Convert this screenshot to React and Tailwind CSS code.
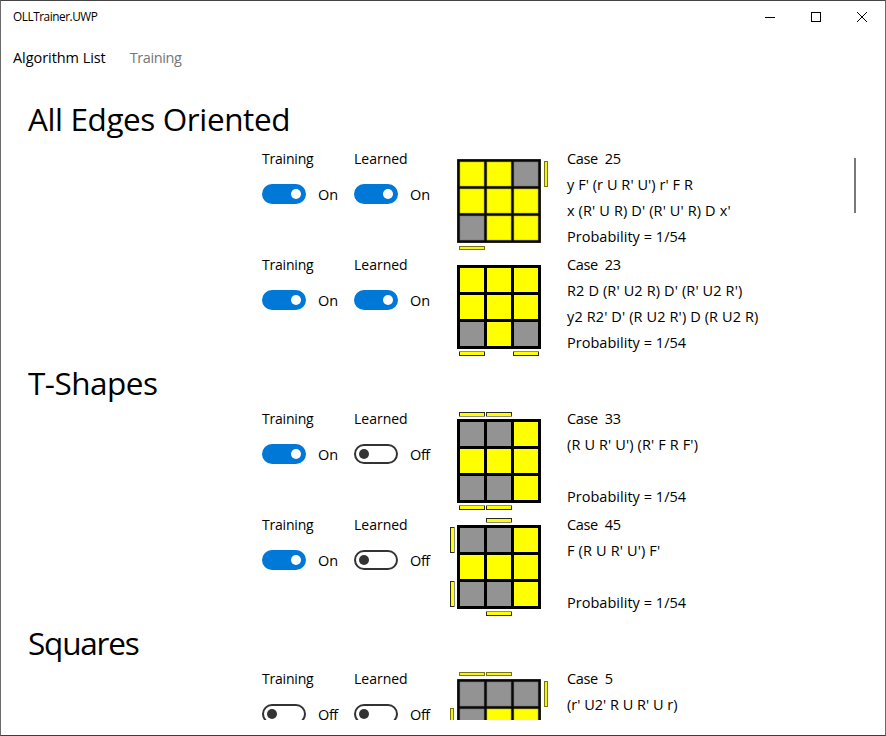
import React from "react";

const YELLOW = "#ffff00";
const GRAY = "#939393";

const sections = [
  {
    title: "All Edges Oriented",
    heading: "leading-[42px] tracking-[-0.4px]",
    cases: [
      {
        id: "25",
        training: true,
        learned: true,
        soft: true,
        cells: "YYGYYYGYY",
        bars: ["r0", "b0"],
        algs: [
          { text: "y F' (r U R' U') r' F R", tracking: "tracking-[0.06px]" },
          { text: "x (R' U R) D' (R' U' R) D x'", tracking: "tracking-[0.13px]" },
        ],
        probability: "1/54",
      },
      {
        id: "23",
        training: true,
        learned: true,
        cells: "YYYYYYGYG",
        bars: ["b0", "b2"],
        algs: [
          { text: "R2 D (R' U2 R) D' (R' U2 R')", tracking: "tracking-[0.13px]" },
          { text: "y2 R2' D' (R U2 R') D (R U2 R)", tracking: "tracking-[0.12px]" },
        ],
        probability: "1/54",
      },
    ],
  },
  {
    title: "T-Shapes",
    heading: "leading-[50px] tracking-[-0.5px]",
    cases: [
      {
        id: "33",
        training: true,
        learned: false,
        cells: "GGYYYYGGY",
        bars: ["t0", "t1", "b0", "b1"],
        algs: [{ text: "(R U R' U') (R' F R F')", tracking: "tracking-[0.13px]" }],
        probability: "1/54",
      },
      {
        id: "45",
        training: true,
        learned: false,
        cells: "GGYYYYGGY",
        bars: ["t1", "l0", "l2", "b1"],
        algs: [{ text: "F (R U R' U') F'", tracking: "tracking-[0.15px]" }],
        probability: "1/54",
      },
    ],
  },
  {
    title: "Squares",
    heading: "leading-[50px] tracking-[-1.2px]",
    cases: [
      {
        id: "5",
        training: false,
        learned: false,
        soft: true,
        cells: "GGGGYYYYG",
        bars: ["t0", "t1", "r0", "l1"],
        algs: [{ text: "(r' U2' R U R' U r)", tracking: "tracking-normal" }],
      },
    ],
  },
];

function Bar({ code, soft }) {
  const side = code[0];
  const offset = 2 + 27 * Number(code[1]);
  const vertical = side === "l" || side === "r";
  const thickness = soft ? 4 : 5;
  const far = soft ? 87 : 86;
  const x = side === "l" ? -7 : side === "r" ? far : offset;
  const y = side === "t" ? -7 : side === "b" ? far : offset;
  const w = vertical ? thickness : 26;
  const h = vertical ? 26 : thickness;
  if (soft) {
    return (
      <g>
        <rect x={x} y={y} width={w} height={h} fill="#77750f" />
        <rect x={x + 1} y={y + 1} width={w - 2} height={h - 2} fill="#f4f21a" />
      </g>
    );
  }
  return (
    <g>
      <rect x={x} y={y} width={w} height={h} fill="#2b2b22" />
      {side === "t" && <rect x={x} y={y + 4} width={w} height={1} fill="#8c8c8c" />}
      {side === "b" && <rect x={x} y={y} width={w} height={1} fill="#8c8c8c" />}
      {side === "l" && <rect x={x + 4} y={y} width={1} height={h} fill="#8c8c8c" />}
      {side === "r" && <rect x={x} y={y} width={1} height={h} fill="#8c8c8c" />}
      <rect x={x + 1} y={y + 1} width={w - 2} height={h - 2} fill={YELLOW} />
    </g>
  );
}

function Cube({ cells, bars, soft }) {
  return (
    <svg
      className="block h-[106px] w-[106px] shrink-0"
      viewBox="-10 -13 106 106"
      shapeRendering="crispEdges"
    >
      {soft ? (
        <rect x="0.1" y="0.1" width="83.8" height="83.8" fill="#080808" shapeRendering="auto" />
      ) : (
        <rect width="84" height="84" fill="#000000" />
      )}
      {cells.split("").map((c, i) => {
        const x = 3 + 27 * (i % 3);
        const y = 3 + 27 * Math.floor(i / 3);
        const fill = c === "Y" ? YELLOW : GRAY;
        return (
          <g key={i}>
            {soft && (
              <rect
                x={x - 0.3}
                y={y - 0.3}
                width="24.6"
                height="24.6"
                fill={c === "Y" ? "#c0c000" : "#777777"}
                shapeRendering="auto"
              />
            )}
            {soft ? (
              <rect
                x={x + 0.3}
                y={y + 0.3}
                width="23.4"
                height="23.4"
                fill={fill}
                shapeRendering="auto"
              />
            ) : (
              <rect x={x} y={y} width="24" height="24" fill={fill} />
            )}
          </g>
        );
      })}
      {bars.map((b) => (
        <Bar key={b} code={b} soft={soft} />
      ))}
    </svg>
  );
}

function Toggle({ label, tracking, on }) {
  return (
    <div className="w-[92px] shrink-0">
      <div className={`h-[26px] leading-[26px] text-[14px] ${tracking}`}>{label}</div>
      <div className="mt-3 flex h-5 items-center gap-3">
        {on ? (
          <span className="flex h-5 w-11 shrink-0 items-center justify-end rounded-full bg-[#0078d7] pr-[5px]">
            <span className="size-[10px] rounded-full bg-white" />
          </span>
        ) : (
          <span className="flex h-5 w-11 shrink-0 items-center rounded-full border-2 border-[#333333] pl-[3px]">
            <span className="size-[10px] rounded-full bg-[#333333]" />
          </span>
        )}
        <span className={on ? "pt-0.5" : "pt-0.5 tracking-[-0.4px]"}>{on ? "On" : "Off"}</span>
      </div>
    </div>
  );
}

function CaseRow({ item }) {
  return (
    <div className="flex h-[106px] pl-[261px]">
      <Toggle label="Training" tracking="tracking-[-0.2px]" on={item.training} />
      <Toggle label="Learned" tracking="tracking-normal" on={item.learned} />
      <div className="ml-px flex">
        <Cube cells={item.cells} bars={item.bars} soft={item.soft} />
        <div className="ml-[14px] grid grid-rows-[26px_26px_26px_26px] content-start whitespace-nowrap leading-[26px]">
          <div className="flex gap-[7px] tracking-[-0.35px]">
            <span>Case</span>
            <span>{item.id}</span>
          </div>
          {[0, 1].map((i) => (
            <div key={i} className={item.algs[i] ? item.algs[i].tracking : ""}>
              {item.algs[i] ? item.algs[i].text : ""}
            </div>
          ))}
          {item.probability && <div className="tracking-[0.03px]">Probability = {item.probability}</div>}
        </div>
      </div>
    </div>
  );
}

function TitleBar() {
  return (
    <header className="flex h-[31px] shrink-0 items-center justify-between pl-3">
      <span className="text-[11.8px] tracking-[-0.45px]">OLLTrainer.UWP</span>
      <svg className="h-[31px] w-[138px]" viewBox="0 0 138 31" fill="none" stroke="#000000">
        <path d="M18 16.5h10" />
        <rect x="64.5" y="11.5" width="9" height="9" />
        <path d="M110 11l10 10M120 11l-10 10" />
      </svg>
    </header>
  );
}

export default function App() {
  return (
    <div className="flex h-[736px] w-[886px] flex-col overflow-hidden border border-t-[#444444] border-r-[#6a6a6a] border-b-[#3c3c47] border-l-[#6a6a6a] bg-white font-['Open_Sans','Noto_Sans',sans-serif] text-[14.5px] text-black">
      <TitleBar />
      <nav className="flex h-[52px] shrink-0 items-center gap-[24px] pl-3">
        <span className="tracking-[-0.06px]">Algorithm List</span>
        <span className="tracking-[-0.4px] text-[#767676]">Training</span>
      </nav>
      <main className="mt-[14px] flex h-[622px] shrink-0 overflow-hidden">
        <div className="w-[853px] shrink-0">
          {sections.map((s) => (
            <section key={s.title}>
              <h2 className={`h-12 pl-[27px] text-[31.5px] ${s.heading}`}>{s.title}</h2>
              {s.cases.map((c) => (
                <CaseRow key={c.id} item={c} />
              ))}
            </section>
          ))}
        </div>
        <div className="mt-[60px] h-[55px] w-[2px] bg-[#7a7a7a]" />
      </main>
    </div>
  );
}
